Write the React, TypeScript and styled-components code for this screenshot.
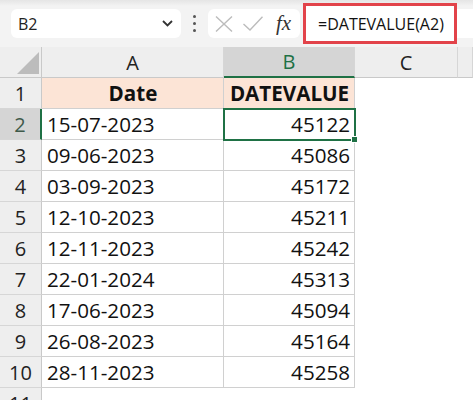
import React from "react";
import styled, { createGlobalStyle, css } from "styled-components";

const GREEN = "#1f7145";
const GRID = "#d0d0d0";

const rows: [string, number][] = [
  ["15-07-2023", 45122],
  ["09-06-2023", 45086],
  ["03-09-2023", 45172],
  ["12-10-2023", 45211],
  ["12-11-2023", 45242],
  ["22-01-2024", 45313],
  ["17-06-2023", 45094],
  ["26-08-2023", 45164],
  ["28-11-2023", 45258],
];

const GlobalStyle = createGlobalStyle`
  html, body {
    margin: 0;
    padding: 0;
    background: #ffffff;
    font-family: "Open Sans", "Noto Sans", sans-serif;
    color: #111;
  }
  #root {
    width: 473px;
    height: 400px;
    overflow: hidden;
  }
`;

const Page = styled.div`
  width: 473px;
  height: 400px;
  overflow: hidden;
  display: flex;
  flex-direction: column;
`;

/* ---------- formula bar ---------- */

const Toolbar = styled.div`
  height: 47px;
  flex: none;
  display: flex;
  align-items: center;
  padding-left: 11px;
  background: linear-gradient(#e5e5e5 0, #f3f3f3 6px, #f3f3f3 100%);
  box-sizing: border-box;
`;

const NameBox = styled.div`
  flex: none;
  width: 170px;
  height: 29px;
  box-sizing: border-box;
  background: #fff;
  border-radius: 6px;
  display: flex;
  align-items: center;
  justify-content: space-between;
  padding: 0 8px 0 7px;
  font-size: 16px;
  color: #222;
`;

const Dots = styled.div`
  flex: none;
  width: 26px;
  display: flex;
  flex-direction: column;
  align-items: center;
  gap: 4px;

  span {
    width: 3px;
    height: 3px;
    border-radius: 50%;
    background: #555;
  }
`;

const FxBox = styled.div`
  flex: none;
  width: 92px;
  height: 29px;
  margin-left: 1px;
  box-sizing: border-box;
  background: #fff;
  border-radius: 6px;
  display: flex;
  align-items: center;
  padding-left: 7px;
  gap: 10px;
`;

const Fx = styled.span`
  font-family: "Liberation Serif", "DejaVu Serif", serif;
  font-style: italic;
  font-size: 21px;
  color: #333;
  margin-left: 3px;
  line-height: 1;
`;

const FormulaWrap = styled.div`
  flex: 1;
  display: flex;
  align-items: center;
  margin-left: 3px;
`;

const Highlight = styled.div`
  flex: none;
  width: 154px;
  height: 41px;
  box-sizing: border-box;
  border: 3px solid #e2434a;
  background: #fff;
  display: flex;
  align-items: center;
  padding-left: 12px;
  font-size: 16px;
  color: #111;
`;

const Tail = styled.div`
  flex: 1;
  height: 29px;
  background: #fff;
`;

/* ---------- sheet ---------- */

const Sheet = styled.div`
  display: grid;
  grid-template-columns: 42px 182px 131px 103px 1fr;
  grid-auto-rows: 31px;
`;

const Corner = styled.div`
  background: #eeeeee;
  border-right: 1px solid #c9c9c9;
  border-bottom: 1px solid #c9c9c9;
  box-sizing: border-box;

  svg {
    display: block;
  }
`;

const ColHead = styled.div<{ $active?: boolean }>`
  box-sizing: border-box;
  background: ${(p) => (p.$active ? "#d5d5d5" : "#eeeeee")};
  border-right: 1px solid #d6d6d6;
  border-bottom: ${(p) => (p.$active ? `2px solid ${GREEN}` : "1px solid #c9c9c9")};
  display: flex;
  align-items: center;
  justify-content: center;
  font-size: 20px;
  color: ${(p) => (p.$active ? GREEN : "#222")};
`;

const RowHead = styled.div<{ $active?: boolean }>`
  box-sizing: border-box;
  background: ${(p) => (p.$active ? "#d5d5d5" : "#eeeeee")};
  border-right: ${(p) => (p.$active ? `2px solid ${GREEN}` : "1px solid #c9c9c9")};
  border-bottom: 1px solid #d6d6d6;
  display: flex;
  align-items: center;
  justify-content: center;
  font-size: 20px;
  color: ${(p) => (p.$active ? "#3f5a4a" : "#222")};
`;

const Cell = styled.div<{
  $align?: "left" | "right" | "center";
  $header?: boolean;
  $selected?: boolean;
  $plain?: boolean;
}>`
  box-sizing: border-box;
  position: relative;
  display: flex;
  align-items: center;
  padding: 0 4px 0 5px;
  font-size: 20.6px;
  white-space: nowrap;
  color: #111;
  background: ${(p) => (p.$header ? "#fce4d6" : "#fff")};
  font-weight: ${(p) => (p.$header ? 700 : 400)};
  justify-content: ${(p) =>
    p.$align === "right" ? "flex-end" : p.$align === "center" ? "center" : "flex-start"};
  ${(p) =>
    !p.$plain &&
    css`
      border-right: 1px solid ${GRID};
      border-bottom: 1px solid ${GRID};
    `}

  ${(p) =>
    p.$selected &&
    css`
      &::after {
        content: "";
        position: absolute;
        top: -1px;
        left: -1px;
        right: -2px;
        bottom: -2px;
        border: 2px solid ${GREEN};
        z-index: 2;
      }
      &::before {
        content: "";
        position: absolute;
        right: -4px;
        bottom: -4px;
        width: 5px;
        height: 5px;
        background: ${GREEN};
        border: 1px solid #fff;
        z-index: 3;
      }
    `}
`;

const Blank = styled.div`
  background: #fff;
`;

const XIcon = () => (
  <svg width="18" height="16" viewBox="0 0 18 16">
    <path d="M1 0.5 L17 15.5 M17 0.5 L1 15.5" stroke="#bcbcbc" strokeWidth="1.4" fill="none" />
  </svg>
);

const CheckIcon = () => (
  <svg width="20" height="15" viewBox="0 0 20 15">
    <path d="M0.5 8 L7 14 L19.5 0.8" stroke="#bcbcbc" strokeWidth="1.4" fill="none" />
  </svg>
);

const Chevron = () => (
  <svg width="11" height="7" viewBox="0 0 11 7">
    <path d="M1 1 L5.5 5.5 L10 1" stroke="#333" strokeWidth="1.8" fill="none" />
  </svg>
);

const App: React.FC = () => {
  return (
    <Page>
      <GlobalStyle />
      <Toolbar>
        <NameBox>
          <span>B2</span>
          <Chevron />
        </NameBox>
        <Dots>
          <span />
          <span />
          <span />
        </Dots>
        <FxBox>
          <XIcon />
          <CheckIcon />
          <Fx>fx</Fx>
        </FxBox>
        <FormulaWrap>
          <Highlight>=DATEVALUE(A2)</Highlight>
          <Tail />
        </FormulaWrap>
      </Toolbar>

      <Sheet>
        <Corner>
          <svg width="41" height="30" viewBox="0 0 41 30">
            <polygon points="17,27 39,5 39,27" fill="#bcbcbc" />
          </svg>
        </Corner>
        <ColHead>A</ColHead>
        <ColHead $active>B</ColHead>
        <ColHead>C</ColHead>
        <ColHead />

        <RowHead>1</RowHead>
        <Cell $header $align="center">Date</Cell>
        <Cell $header $align="center">DATEVALUE</Cell>
        <Cell $plain />
        <Blank />

        {rows.map(([date, value], i) => (
          <React.Fragment key={date + i}>
            <RowHead $active={i === 0}>{i + 2}</RowHead>
            <Cell>{date}</Cell>
            <Cell $align="right" $selected={i === 0}>
              {value}
            </Cell>
            <Cell $plain />
            <Blank />
          </React.Fragment>
        ))}

        <RowHead>11</RowHead>
        <Cell $plain />
        <Cell $plain />
        <Cell $plain />
        <Blank />
      </Sheet>
    </Page>
  );
};

export default App;
